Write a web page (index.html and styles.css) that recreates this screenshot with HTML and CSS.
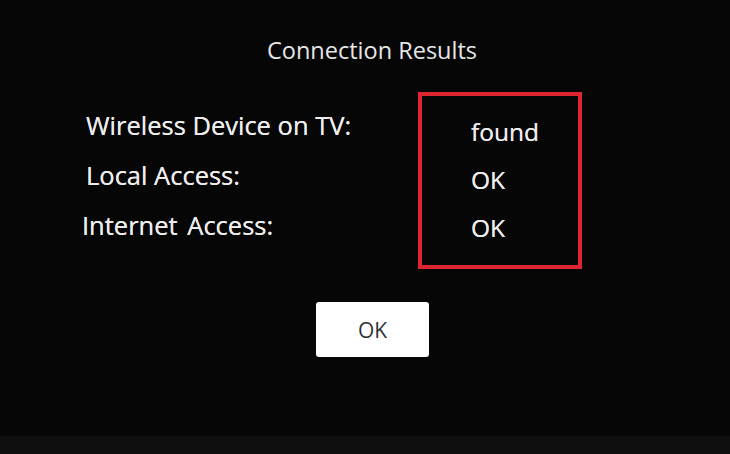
FILE: index.html
```html
<!DOCTYPE html>
<html lang="en">
<head>
    <meta charset="UTF-8">
    <meta name="viewport" content="width=device-width, initial-scale=1.0">
    <title>Connection Results</title>
    <link rel="stylesheet" href="styles.css">
</head>
<body>
    <div class="screen">
        <h2 class="title">Connection Results</h2>
        <div class="results">
            <div class="labels">
                <div class="label">Wireless Device on TV:</div>
                <div class="label">Local Access:</div>
                <div class="label label-shift">Internet Access:</div>
            </div>
            <div class="values">
                <div class="value">found</div>
                <div class="value">OK</div>
                <div class="value">OK</div>
            </div>
        </div>
        <div class="actions">
            <button class="button">OK</button>
        </div>
    </div>
    <div class="footer"></div>
</body>
</html>
```

FILE: styles.css
```css
body {
    margin: 0;
    background-color: #060606;
    font-family: "Open Sans", "DejaVu Sans", sans-serif;
    color: #ececec;
    overflow: hidden;
}
.screen {
    height: 436px;
    box-sizing: border-box;
    padding-top: 35px;
}
.title {
    margin: 0 0 0 14px;
    text-align: center;
    font-size: 23.5px;
    font-weight: normal;
    line-height: 30px;
    color: #e6e6e6;
}
.results {
    display: flex;
    margin-top: 27px;
}
.labels {
    width: 332px;
    margin-left: 86px;
    padding-top: 8px;
}
.label {
    height: 50px;
    line-height: 50px;
    font-size: 25.5px;
    white-space: nowrap;
    text-shadow: 0 0 0.4px #ececec;
}
.label-shift {
    margin-left: -4px;
    word-spacing: 3px;
}
.values {
    width: 164px;
    height: 177px;
    box-sizing: border-box;
    border: 4px solid #df2530;
    padding: 12px 0 0 49px;
}
.value {
    height: 48px;
    line-height: 48px;
    font-size: 24.5px;
    text-shadow: 0 0 0.4px #ececec;
}
.actions {
    margin: 33px 0 0 316px;
}
.button {
    width: 113px;
    height: 55px;
    border: none;
    border-radius: 3px;
    background-color: #ffffff;
    color: #333333;
    font-family: "Open Sans", sans-serif;
    font-size: 21px;
    cursor: pointer;
}
.footer {
    height: 18px;
    background-color: #0f0f0f;
}
```
